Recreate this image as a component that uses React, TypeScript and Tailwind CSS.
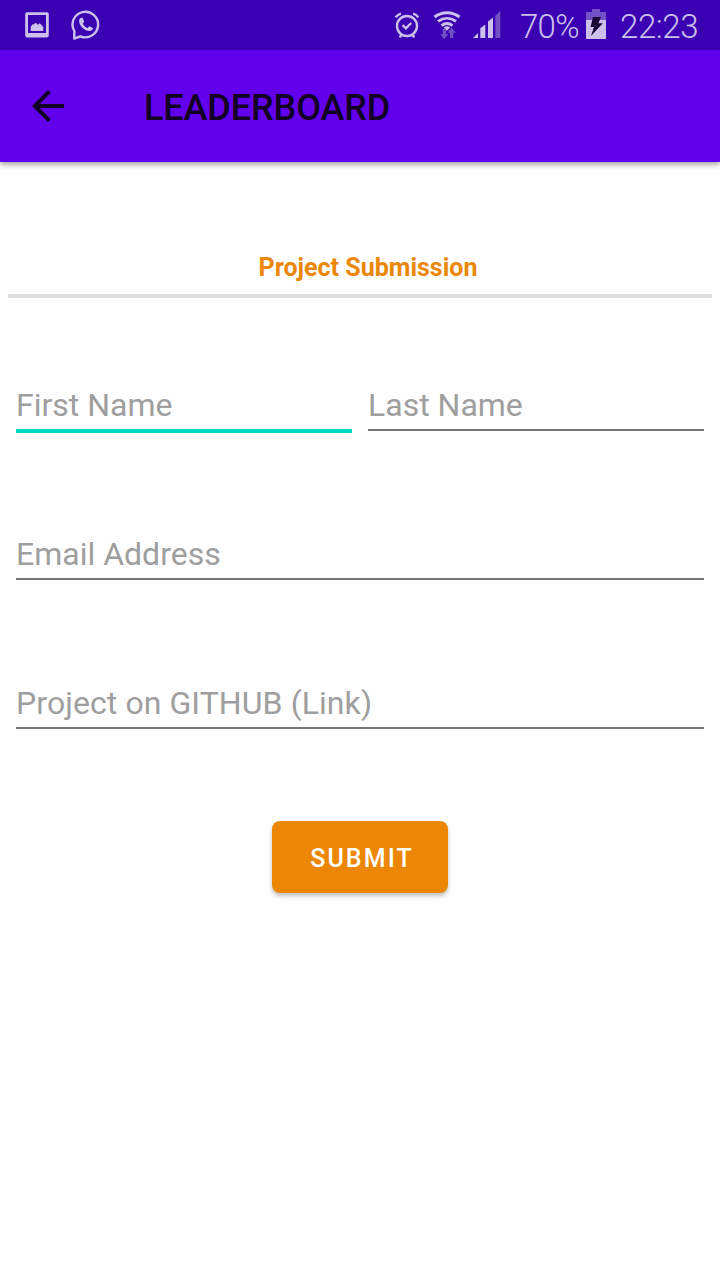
import React from "react";

const ICON = "#cdc0ec";

function PictureIcon() {
  return (
    <svg width="24" height="26" viewBox="25 12 24 26" className="ml-[25px] mt-3" fill={ICON}>
      <path fillRule="evenodd" d="M27 12.300h20a1.800 1.800 0 0 1 1.800 1.800v21.500a1.800 1.800 0 0 1-1.800 1.800H27a1.800 1.800 0 0 1-1.800-1.800V14.100a1.800 1.800 0 0 1 1.800-1.800zM28 15v18h18V15z" />
      <path d="M30.700 31v-4.300l2-2.400h1.300l1.200-1.300h1l1.500 2 1.300-1.500h1l1.500 1.500 1.800 2.300V31z" />
    </svg>
  );
}

function WhatsappIcon() {
  return (
    <svg width="30" height="32" viewBox="70 9 30 32" className="ml-[22px] mt-[9px]">
      <path d="M73.400 31.200A12.800 12.800 0 1 1 79.300 36.300L73.200 38.600z" fill="none" stroke={ICON} strokeWidth="2.400" strokeLinejoin="round" />
      <path d="M79.500 18l2.200-.2 1.500 4-1.400 1.900c1 2 2.500 3.400 4.700 4.300l1.700-1.700 3.800 1.800c.2 1.600-1.500 3-3.500 3C83.500 31.100 78.100 25.500 78.100 21c0-1.500.7-2.500 1.400-3z" fill={ICON} />
    </svg>
  );
}

function AlarmIcon() {
  return (
    <svg width="26" height="27" viewBox="394 12 26 27" className="mt-3" fill="none" stroke={ICON} strokeWidth="2.400">
      <circle cx="407" cy="26" r="10" />
      <path d="M402.600 25.200l3.300 3.200 5.300-5.400" />
      <path d="M395.700 17.400q1.500-2.800 5.200-3.800M418.300 17.400q-1.500-2.800-5.200-3.800M401.200 34.500l-1.200 3M412.800 34.500l1.200 3" />
    </svg>
  );
}

function WifiIcon() {
  return (
    <svg width="28" height="30" viewBox="433 10 28 30" className="ml-[13px] mt-[10px]">
      <g fill="none" stroke={ICON} strokeWidth="2.900">
        <path d="M434.500 17c7.500-5.700 17.500-5.700 25 0" />
        <path d="M438 21.400c5.500-4 12.500-4 18 0" />
        <path d="M441.500 25.600c3.300-2.500 7.700-2.500 11 0" />
      </g>
      <path d="M443.700 27.500q3.300-2.300 6.600 0L447 30.800z" fill={ICON} />
      <path d="M442.700 29h3.300v5.200h2.300L444.300 39.200 440.100 34.200h2.600zM450 38v-5.200h-2.400l4.100-5.200 4.100 5.200h-2.600V38z" fill="#7350c4" />
    </svg>
  );
}

function SignalIcon() {
  return (
    <svg width="28" height="28" viewBox="473 11 28 28" className="ml-3 mt-[11px]" fill={ICON}>
      <path d="M473 38l5-5v5zM480.300 38v-9.700l5-3.800V38zM488 38V21.500l5-4V38z" />
      <path d="M495.300 38V15.700l5-4.900V38z" fill="#7350c4" />
    </svg>
  );
}

function BatteryIcon() {
  return (
    <svg width="20" height="30" viewBox="586 9 20 30" className="ml-[7px] mt-[9px]">
      <path d="M592 9h8v3h6v8h-20v-8h6z" fill="#7350c4" />
      <path d="M586 20h20v19h-20z" fill={ICON} />
      <path d="M593 17h8l-2.600 6.200h4.400L591 36l3-9h-3.500z" fill="#180636" />
    </svg>
  );
}

function StatusBar() {
  return (
    <div className="flex h-[50px] items-start justify-between bg-[#3a00b2]">
      <div className="flex items-start">
        <PictureIcon />
        <WhatsappIcon />
      </div>
      <div className="flex items-start text-[33px] leading-[38px] text-[#cdc0ec]">
        <AlarmIcon />
        <WifiIcon />
        <SignalIcon />
        <span className="ml-[19px] mt-2 w-[59px] whitespace-nowrap font-[350] tracking-[-0.7px]">70%</span>
        <BatteryIcon />
        <span className="ml-[14px] mt-2 w-[100px] whitespace-nowrap font-[350] tracking-[-0.4px]">22:23</span>
      </div>
    </div>
  );
}

function Field({ label, active = false }: { label: string; active?: boolean }) {
  return (
    <div className="h-[51px] flex-1 text-[32px] leading-[38px] text-[#9e9e9e]">
      <div className="h-[45px] pt-0.5">{label}</div>
      <div className={active ? "h-1 bg-[#00dac5]" : "h-0.5 bg-[#757575]"} />
    </div>
  );
}

export default function App() {
  return (
    <div className="h-[1280px] w-[720px] overflow-hidden bg-[#fefefe] font-['Roboto',sans-serif]">
      <StatusBar />
      <header className="flex h-28 items-center bg-[#6200ee] pl-8 shadow-[0_3px_5px_rgba(0,0,0,0.32)]">
        <svg width="32" height="32" viewBox="4 4 16 16" fill="#120124">
          <path d="M20 11H7.830l5.590-5.590L12 4l-8 8 8 8 1.410-1.410L7.830 13H20z" />
        </svg>
        <h1 className="ml-20 pt-1 text-[36px] font-medium leading-[42px] tracking-[-0.1px] text-[#120124]">LEADERBOARD</h1>
      </header>
      <main>
        <div className="mx-2 mt-[90px] h-[46px] border-b-4 border-[#e0e0e0] pl-4 pt-px text-center text-[25px] font-bold leading-[30px] text-[#eb8705]">
          Project Submission
        </div>
        <form className="flex flex-col px-4 pt-[86px]">
          <div className="flex gap-4">
            <Field label="First Name" active />
            <Field label="Last Name" />
          </div>
          <div className="mt-[98px] flex">
            <Field label="Email Address" />
          </div>
          <div className="mt-[98px] flex tracking-[0.08px]">
            <Field label="Project on GITHUB (Link)" />
          </div>
          <button type="button" className="mt-[88px] h-[72px] w-44 self-center rounded-lg bg-[#eb8705] pl-1 pt-1 text-[25px] font-medium tracking-[2.100px] text-white shadow-[0_3px_4px_rgba(0,0,0,0.24)]">
            SUBMIT
          </button>
        </form>
      </main>
    </div>
  );
}
